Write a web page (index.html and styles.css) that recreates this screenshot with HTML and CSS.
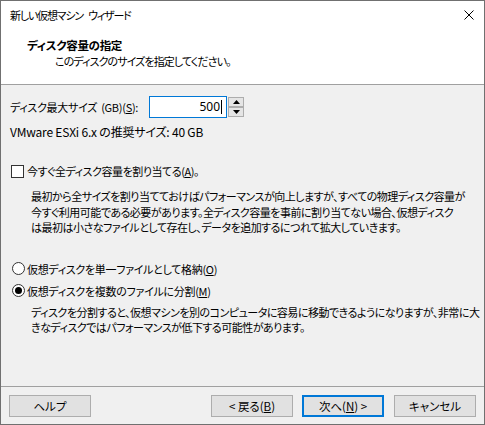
FILE: index.html
```html
<!DOCTYPE html>
<html lang="ja">
<head>
<meta charset="utf-8">
<link rel="stylesheet" href="styles.css">
</head>
<body>
<div class="window">
  <div class="top">
    <div class="titlebar">
      <span class="title">新しい仮想マシン ウィザード</span>
      <svg class="close" width="10" height="10" viewBox="0 0 10 10"><path d="M0.5 0.5 L9.5 9.5 M9.5 0.5 L0.5 9.5" stroke="#000" stroke-width="1" fill="none"/></svg>
    </div>
    <div class="header">
      <div class="h-title">ディスク容量の指定</div>
      <div class="h-sub">このディスクのサイズを指定してください。</div>
    </div>
  </div>
  <div class="content">
    <div class="size-row">
      <span class="size-label">ディスク最大サイズ (GB)(<u>S</u>):</span>
      <div class="spin">
        <div class="spin-input">500<span class="caret"></span></div>
        <div class="spin-btns">
          <div class="spin-btn"><svg width="7" height="4" viewBox="0 0 7 4"><path d="M3.5 0 L7 4 L0 4 Z" fill="#000"/></svg></div>
          <div class="spin-btn"><svg width="7" height="4" viewBox="0 0 7 4"><path d="M0 0 L7 0 L3.5 4 Z" fill="#000"/></svg></div>
        </div>
      </div>
    </div>
    <div class="rec">VMware ESXi 6.x の推奨サイズ: 40 GB</div>
    <div class="check-row"><span class="checkbox"></span><span>今すぐ全ディスク容量を割り当てる(<u>A</u>)。</span></div>
    <p class="desc desc1">最初から全サイズを割り当てておけばパフォーマンスが向上しますが、すべての物理ディスク容量が<br>今すぐ利用可能である必要があります。全ディスク容量を事前に割り当てない場合、仮想ディスク<br>は最初は小さなファイルとして存在し、データを追加するにつれて拡大していきます。</p>
    <div class="radios">
      <div class="radio-row"><span class="radio"></span><span>仮想ディスクを単一ファイルとして格納(<u>O</u>)</span></div>
      <div class="radio-row"><span class="radio checked"></span><span>仮想ディスクを複数のファイルに分割(<u>M</u>)</span></div>
    </div>
    <p class="desc desc2">ディスクを分割すると、仮想マシンを別のコンピュータに容易に移動できるようになりますが、非常に大<br>きなディスクではパフォーマンスが低下する可能性があります。</p>
  </div>
  <div class="footer">
    <button class="btn">ヘルプ</button>
    <div class="spacer"></div>
    <button class="btn">&lt; 戻る(<u>B</u>)</button>
    <button class="btn default">次へ(<u>N</u>) &gt;</button>
    <button class="btn cancel">キャンセル</button>
  </div>
</div>
</body>
</html>
```

FILE: styles.css
```css
* { box-sizing: border-box; }
html, body { margin: 0; padding: 0; }
body {
  font-family: "Noto Sans CJK JP", "Noto Sans", sans-serif;
  font-size: 11px;
  font-feature-settings: "palt";
  color: #000;
  background: #f0f0f0;
}
.window {
  width: 485px;
  height: 425px;
  border: 1px solid #707070;
  background: #f0f0f0;
  display: flex;
  flex-direction: column;
  overflow: hidden;
}
.top {
  background: #fff;
  border-bottom: 1px solid #a0a0a0;
  height: 84px;
}
.titlebar {
  height: 29px;
  display: flex;
  align-items: center;
  justify-content: space-between;
  padding: 0 10px 1px 9px;
}
.title {
  line-height: 16px;
  letter-spacing: -1.2px;
  word-spacing: 4px;
}
.close { margin-top: -1px; }
.header {
  padding-top: 7px;
  line-height: 16px;
}
.h-title {
  font-weight: bold;
  font-size: 11.5px;
  letter-spacing: -0.3px;
  padding-left: 26px;
}
.h-sub {
  padding-left: 54px;
  letter-spacing: -0.9px;
}
.content {
  flex: 1;
  padding: 11px 9px 0 9px;
  line-height: 16px;
}
.size-row {
  display: flex;
  align-items: center;
  height: 22px;
}
.size-label {
  width: 139px;
  white-space: nowrap;
  letter-spacing: -0.3px;
  word-spacing: 2px;
}
.spin {
  display: flex;
  height: 22px;
}
.spin-input {
  width: 78px;
  height: 22px;
  border: 1px solid #0078d7;
  background: #fff;
  display: flex;
  align-items: center;
  justify-content: flex-end;
  padding-right: 4px;
  font-family: "Noto Sans", sans-serif;
  font-size: 12px;
}
.caret {
  display: inline-block;
  width: 1px;
  height: 14px;
  background: #000;
  margin-left: 1px;
}
.spin-btns {
  display: flex;
  flex-direction: column;
  padding: 1px 0 1px 1px;
}
.spin-btn {
  width: 16px;
  height: 10px;
  border: 1px solid #adadad;
  background: #e5e5e5;
  display: flex;
  align-items: center;
  justify-content: center;
}
.rec {
  margin-top: 6px;
  font-size: 12px;
  letter-spacing: -0.2px;
}
.check-row {
  margin-top: 23px;
  display: flex;
  align-items: center;
  white-space: nowrap;
  letter-spacing: -0.45px;
}
.checkbox {
  width: 13px;
  height: 13px;
  border: 1px solid #333;
  background: #fff;
  margin: 0 3px 0 1px;
  flex: none;
}
.desc {
  margin: 0;
  line-height: 15.5px;
  white-space: nowrap;
  padding-left: 21px;
  letter-spacing: -0.5px;
}
.desc1 { margin-top: 10px; }
.radios {
  margin-top: 22px;
}
.radio-row {
  height: 22px;
  display: flex;
  align-items: center;
  white-space: nowrap;
  letter-spacing: -0.3px;
}
.radio {
  width: 13px;
  height: 13px;
  border: 1px solid #333;
  border-radius: 50%;
  background: #fff;
  margin: 0 2px 0 2px;
  display: flex;
  align-items: center;
  justify-content: center;
  flex: none;
}
.radio.checked::after {
  content: "";
  width: 7px;
  height: 7px;
  border-radius: 50%;
  background: #000;
}
.desc2 { margin-top: 3px; }
.footer {
  height: 38px;
  border-top: 1px solid #a0a0a0;
  display: flex;
  align-items: flex-start;
  padding: 8px 8px 0 8px;
  gap: 9px;
}
.spacer { flex: 1; }
.btn {
  width: 82px;
  height: 22px;
  border: 1px solid #adadad;
  background: #e1e1e1;
  font: inherit;
  font-size: 11.5px;
  font-feature-settings: "palt";
  line-height: 16px;
  color: #000;
  padding: 0;
}
.btn.default {
  border: 2px solid #0078d7;
}
.btn.cancel { margin-left: 1px; }
```
